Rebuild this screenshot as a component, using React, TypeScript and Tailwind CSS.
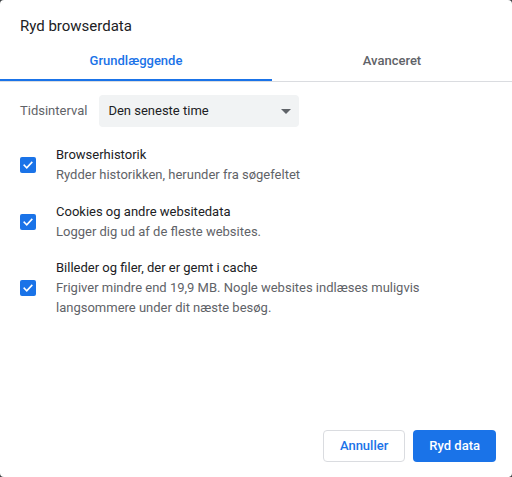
import React, { useState } from 'react';

const items = [
  { title: 'Browserhistorik', desc: ['Rydder historikken, herunder fra søgefeltet'] },
  { title: 'Cookies og andre websitedata', desc: ['Logger dig ud af de fleste websites.'] },
  {
    title: 'Billeder og filer, der er gemt i cache',
    desc: ['Frigiver mindre end 19,9 MB. Nogle websites indlæses muligvis', 'langsommere under dit næste besøg.'],
  },
];

const Check = () => (
  <div className="w-4 h-4 rounded-[2px] bg-[#1a73e8] flex items-center justify-center">
    <svg width="12" height="12" viewBox="0 0 24 24" fill="none">
      <path d="M4.5 12.5l5 5L19.5 7" stroke="white" strokeWidth="3.2" strokeLinecap="square" />
    </svg>
  </div>
);

export default function App() {
  const [tab, setTab] = useState(0);

  return (
    <div className="w-[512px] h-[477px] bg-[#3c4043] font-['Roboto',sans-serif]">
      <div className="w-full h-full bg-white rounded-[4px] flex flex-col">
        <h1 className="px-5 pt-[16px] text-[15px] leading-5 text-[#202124]">Ryd browserdata</h1>

        <div className="mt-[6px] flex border-b border-[#dadce0]">
          {['Grundlæggende', 'Avanceret'].map((t, i) => (
            <button
              key={t}
              onClick={() => setTab(i)}
              className={`h-[39px] text-[13px] font-medium border-b-[2px] ${i === 0 ? 'w-[272px]' : 'flex-1'} ${
                tab === i ? 'text-[#1a73e8] border-[#1a73e8]' : 'text-[#5f6368] border-transparent'
              }`}
            >
              {t}
            </button>
          ))}
        </div>

        <div className="px-5 mt-[13px] flex items-center gap-[12px]">
          <span className="text-[13px] text-[#5f6368]">Tidsinterval</span>
          <div className="w-[200px] h-[32px] rounded-[4px] bg-[#f1f3f4] pl-[9px] pr-[8px] flex items-center justify-between text-[13px] text-[#202124]">
            <span>Den seneste time</span>
            <svg width="10" height="5" viewBox="0 0 10 5">
              <path d="M0 0h10L5 5z" fill="#5f6368" />
            </svg>
          </div>
        </div>

        <div className="mt-[18px] flex flex-col gap-[16.5px]">
          {items.map((it) => (
            <div key={it.title} className="px-5 flex items-center gap-5">
              <Check />
              <div className="text-[13px] leading-5">
                <div className="text-[#202124]">{it.title}</div>
                {it.desc.map((d) => (
                  <div key={d} className="text-[#5f6368]">{d}</div>
                ))}
              </div>
            </div>
          ))}
        </div>

        <div className="mt-auto px-4 pb-[15px] flex justify-end gap-2">
          <button className="h-[32px] px-[16px] rounded-[4px] border border-[#dadce0] text-[13px] font-medium text-[#1a73e8] bg-white">
            Annuller
          </button>
          <button className="h-[32px] px-[16px] rounded-[4px] text-[13px] font-medium text-white bg-[#1a73e8]">
            Ryd data
          </button>
        </div>
      </div>
    </div>
  );
}
